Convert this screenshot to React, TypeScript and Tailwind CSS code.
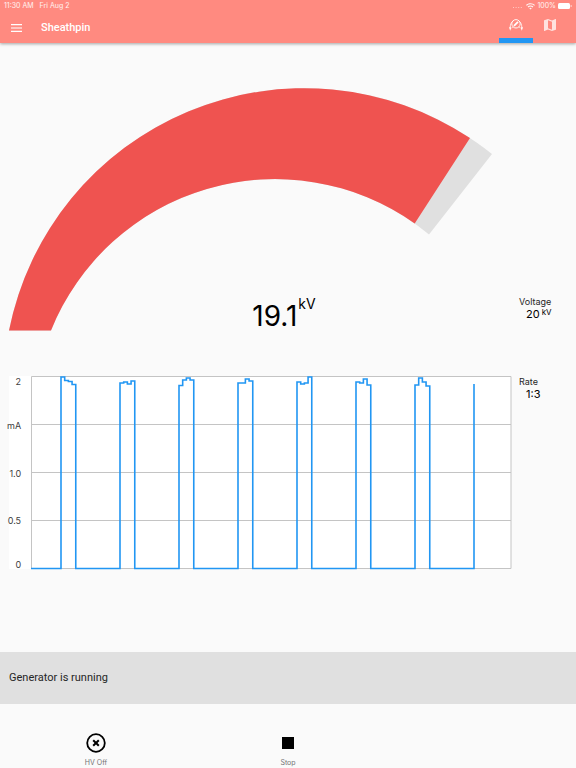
import type { ReactNode } from 'react';

const STEP = 3.69;
const BASE = 192.5;

// first sample of every pulse, and the height of each sample from the top of the plot
const pulses = [
	{ x: 30, tops: [1, 4.5, 5.5, 8.5] },
	{ x: 89, tops: [7, 6, 8, 5] },
	{ x: 148, tops: [9.5, 4, 2, 4] },
	{ x: 207, tops: [7, 7, 3, 5] },
	{ x: 266, tops: [6, 8, 7, 1] },
	{ x: 325, tops: [6, 7, 3, 9] },
	{ x: 384, tops: [9, 2, 6, 10] },
];

const scale = ['mA', '1.0', '0.5'];

function currentPath() {
	let d = `M0 ${BASE}`;
	pulses.forEach(({ x, tops }) => {
		d += ` H${x}`;
		tops.forEach((top, i) => {
			d += ` V${top} H${x + (i + 1) * STEP}`;
		});
		d += ` V${BASE}`;
	});
	return `${d} H443 V8`;
}

function StatusBar() {
	return (
		<div className="flex h-3 items-center justify-between px-1 text-[7px] text-white/90">
			<div className="flex gap-[6px]">
				<span>11:30 AM</span>
				<span>Fri Aug 2</span>
			</div>
			<div className="flex items-center gap-[2px]">
				<svg className="mr-[2px] h-2 w-[9px]" viewBox="0 0 9 8" fill="currentColor" opacity="0.6">
					<path d="M0 5h1v1H0zM2.600 5h1v1h-1zM5.200 5h1v1h-1zM7.800 5h1v1h-1z" />
				</svg>
				<svg className="h-[7px] w-[9px]" viewBox="0 0 16 12" fill="currentColor">
					<path d="M8 0C4.900 0 2.100 1.200 0 3.200l1.500 1.600a9.400 9.400 0 0 1 13 0L16 3.200A11.600 11.600 0 0 0 8 0zM8 4.200c-2 0-3.800.8-5.100 2l1.500 1.600a5.200 5.200 0 0 1 7.200 0l1.500-1.600A7.400 7.400 0 0 0 8 4.200zM8 8.200c-.9 0-1.700.3-2.300.9L8 11.500l2.300-2.400A3.300 3.300 0 0 0 8 8.200z" />
				</svg>
				<span>100%</span>
				<svg className="h-[6px] w-[14px]" viewBox="0 0 14 6" fill="white">
					<rect width="12" height="6" rx="1.500" />
					<rect x="12.600" y="2" width="1" height="2" rx="0.500" opacity="0.700" />
				</svg>
			</div>
		</div>
	);
}

function AppBar() {
	return (
		<header className="relative bg-[#ff8a80] shadow-[0_1px_3px_rgba(0,0,0,0.35)]">
			<StatusBar />
			<div className="flex h-[31px] items-stretch pl-[10px] text-white">
				<button aria-label="Menu" className="flex w-3 items-center justify-center">
					<svg className="h-2 w-[11px]" viewBox="0 0 11 8" fill="currentColor">
						<path d="M0 0h11v1.200H0zM0 3.400h11v1.200H0zM0 6.800h11V8H0z" />
					</svg>
				</button>
				<h1 className="flex-1 self-center pl-[19px] font-[Roboto,sans-serif] text-[11px] leading-4 font-medium">
					Sheathpin
				</h1>
				<nav className="flex pr-[10px]">
					<button aria-label="Gauge" className="flex w-[34px] justify-center border-b-[5px] border-[#2196f3] pt-[6px]">
						<svg className="h-[14px] w-[14px]" viewBox="0 0 14 14" fill="none" stroke="currentColor">
							<path d="M1.200 9.500C1.200 6.500 2.300 4 4.500 2.600M12.800 9.500C12.800 6.500 11.700 4 9.500 2.600" strokeWidth="0.800" />
							<circle cx="7" cy="5.800" r="4.200" strokeWidth="0.900" />
							<path d="M5 7.800L9 3.800" strokeWidth="1.700" />
							<path d="M0 9.200h2.400L1.200 12.800zM11.600 9.200H14l-1.200 3.600z" fill="currentColor" stroke="none" />
							<path d="M2.700 10l1.300-1.200M11.300 10L10 8.800" strokeWidth="0.700" />
						</svg>
					</button>
					<button aria-label="Map" className="flex w-[33px] justify-center pt-[7px] text-white/75">
						<svg className="h-3 w-3" viewBox="3 3 18 18" fill="currentColor">
							<path d="M20.500 3l-.16.030L15 5.100 9 3 3.360 4.900c-.21.070-.36.250-.36.480V20.500c0 .28.220.5.500.5l.16-.030L9 18.900l6 2.100 5.640-1.900c.21-.070.360-.250.360-.480V3.500c0-.280-.220-.500-.500-.500zM15 19l-6-2.110V5l6 2.110V19z" />
						</svg>
					</button>
				</nav>
			</div>
		</header>
	);
}

function Gauge() {
	return (
		<svg className="block w-full" viewBox="0 0 576 243" role="img" aria-label="Voltage gauge">
			<path d="M9 242.500A301 301 0 0 1 492 66L429 146.500A241.600 241.600 0 0 0 51 242.500Z" fill="#e0e0e0" />
			<path d="M9 242.500A301 301 0 0 1 470 50L414.700 135.500A241.600 241.600 0 0 0 51 242.500Z" fill="#ef5350" />
		</svg>
	);
}

function Chart() {
	return (
		<div className="flex flex-1 bg-white">
			<div className="-ml-[2px] grid w-6 grid-rows-[1fr_2fr_2fr_2fr_1fr] pt-[2px] pr-[10px] text-right text-[9px] leading-2 whitespace-nowrap text-neutral-700">
				<span>2</span>
				{scale.map((label) => (
					<span key={label} className="self-center">
						{label}
					</span>
				))}
				<span className="self-end">0</span>
			</div>
			<svg
				className="block min-w-0 flex-1 overflow-visible"
				viewBox="0 0 480 193"
				role="img"
				aria-label="Current in mA"
			>
				<path
					d="M0 48.500H480M0 96.500H480M0 144.500H480M.5 .5H480V192.500H.5Z"
					stroke="#c4c4c4"
					fill="none"
				/>
				<path d={currentPath()} stroke="#2196f3" strokeWidth="1.600" fill="none" />
			</svg>
		</div>
	);
}

function Setting({ label, children }: { label: string; children: ReactNode }) {
	return (
		<dl className="w-14 text-[9px] leading-3 text-neutral-800">
			<dt>{label}</dt>
			<dd className="pl-[7px] text-[11px] text-black">{children}</dd>
		</dl>
	);
}

function Action({ label, children }: { label: string; children: ReactNode }) {
	return (
		<button className="flex flex-col items-center justify-end gap-[5px]">
			{children}
			{label}
		</button>
	);
}

export default function App() {
	return (
		<div className="flex min-h-screen flex-col bg-[#fafafa] font-[Inter,sans-serif] text-black">
			<AppBar />
			<main className="flex flex-1 flex-col pt-[45px]">
				<section className="relative">
					<Gauge />
					<div className="absolute bottom-0 left-0 flex w-full justify-center pr-2">
						<p className="flex text-[28px] leading-[30px]">
							19.1<span className="pl-px text-[14px] leading-[6px]">kV</span>
						</p>
					</div>
					<div className="absolute right-0 bottom-[11px] w-[57px]">
						<Setting label="Voltage">
							<span className="flex">
								20<span className="pl-[2px] text-[8px] leading-2">kV</span>
							</span>
						</Setting>
					</div>
				</section>

				<section className="mt-[45px] flex pl-[9px]">
					<Chart />
					<div className="w-[65px] pl-2">
						<Setting label="Rate">1:3</Setting>
					</div>
				</section>

				<p className="mt-auto flex h-[52px] items-center bg-[#e0e0e0] pl-[9px] font-[Roboto,sans-serif] text-[11px] text-neutral-800">
					Generator is running
				</p>
			</main>
			<footer className="grid h-16 grid-cols-3 text-[7px] leading-[10px] text-neutral-500">
				<Action label="HV Off">
					<svg className="h-5 w-5" viewBox="0 0 20 20" fill="none" stroke="black" strokeWidth="1.800">
						<circle cx="10" cy="10" r="8.800" />
						<path d="M7.200 7.200l5.600 5.600M12.800 7.200l-5.600 5.600" strokeWidth="2" />
					</svg>
				</Action>
				<Action label="Stop">
					<svg className="h-5 w-5" viewBox="0 0 20 20">
						<rect x="4" y="4" width="12" height="12" />
					</svg>
				</Action>
			</footer>
		</div>
	);
}
